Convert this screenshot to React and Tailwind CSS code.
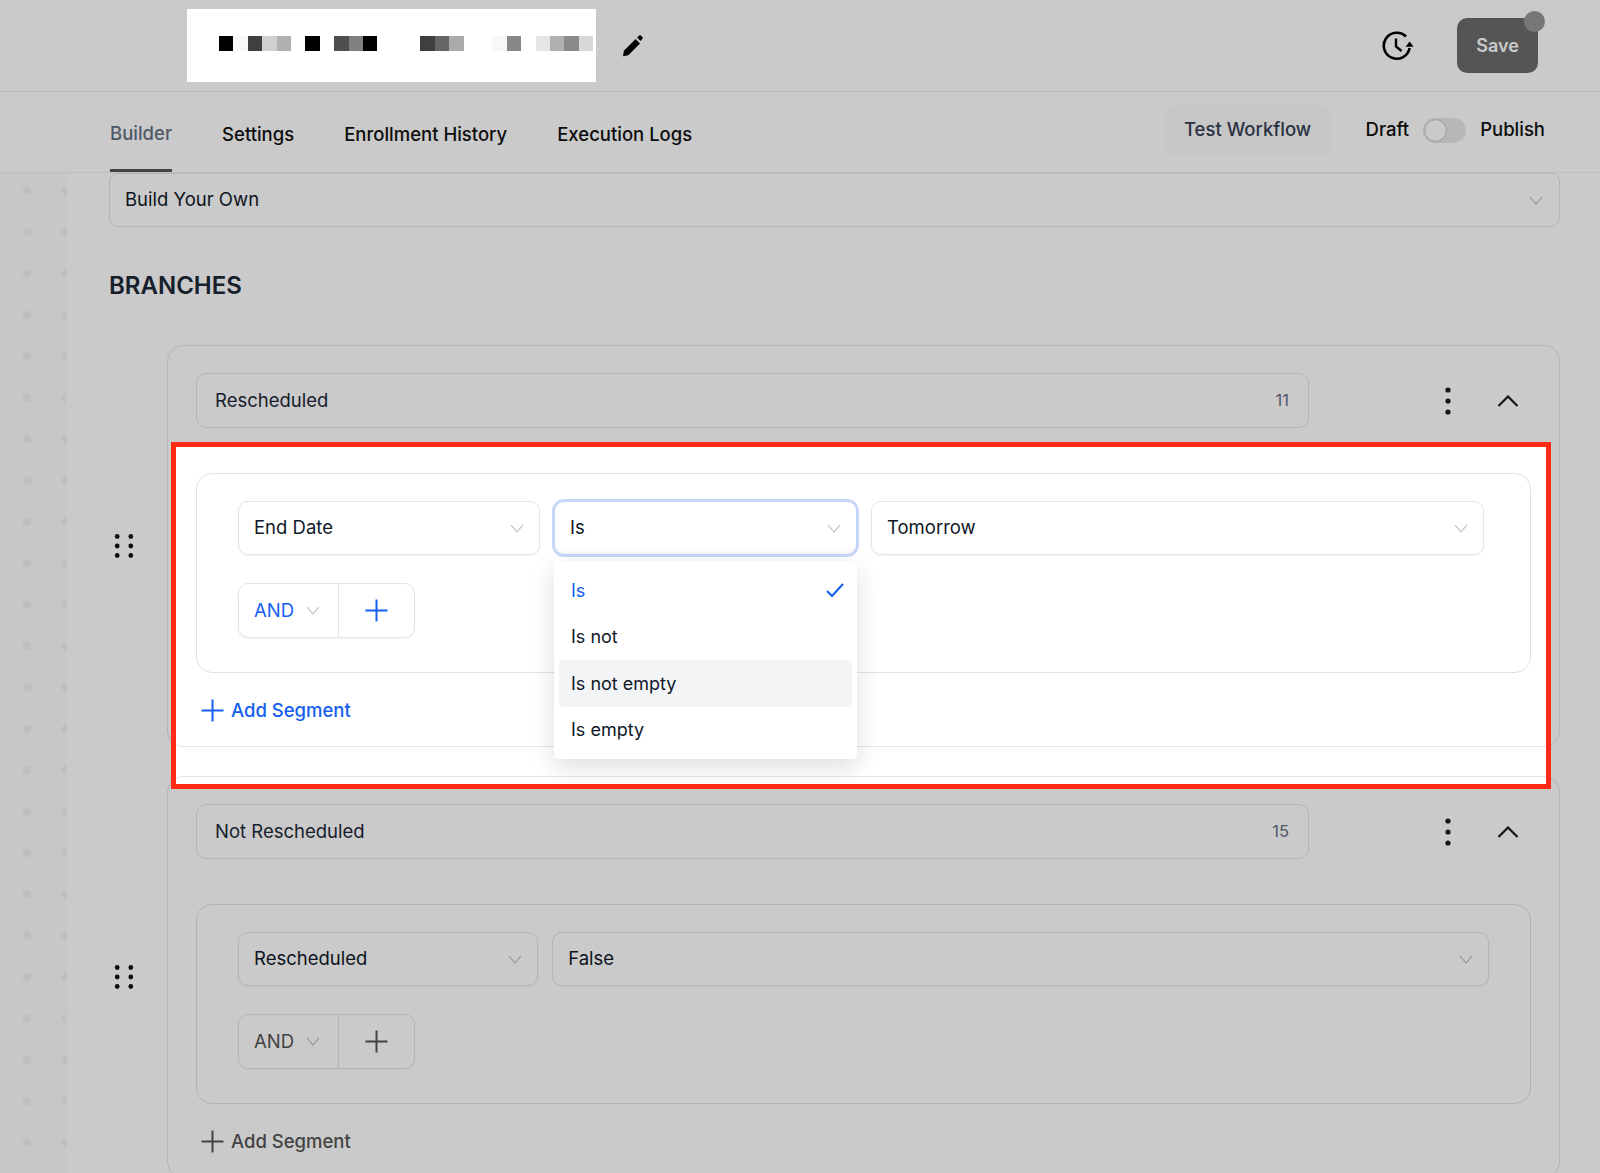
const FONT = "font-['Inter','Liberation_Sans',sans-serif]";

const PIXELS = [
  "#000000","#f8f8f8","#3f3f3f","#d0d0d0","#b0b0b0","#ffffff","#000000","#ffffff","#4f4f4f","#808080","#000000",
  "#ffffff","#ffffff","#ffffff","#3f3f3f","#666666","#aaaaaa","#ffffff","#ffffff","#f8f8f8","#888888","#ffffff","#e6e6e6","#b0b0b0","#8a8a8a","#d8d8d8",
];

function Chevron({ className = "" }) {
  return (
    <svg width="14" height="9" viewBox="0 0 14 9" fill="none" className={`shrink-0 ${className}`}>
      <path d="M1 1l6 7 6-7" stroke="#b5b8bf" strokeWidth="1.1" />
    </svg>
  );
}

function Plus({ color, size = 23 }) {
  return (
    <svg width={size} height={size} viewBox="0 0 23 23" fill="none" className="shrink-0">
      <path d="M11.5 0.5v22M0.5 11.5h22" stroke={color} strokeWidth="2" />
    </svg>
  );
}

function Handle() {
  return (
    <svg width="20" height="26" viewBox="0 0 20 26" fill="#111111">
      {[3.5, 13, 22.5].map((y) => (
        <g key={y}>
          <circle cx="3.2" cy={y} r="2.4" />
          <circle cx="16.8" cy={y} r="2.4" />
        </g>
      ))}
    </svg>
  );
}

function Kebab() {
  return (
    <svg width="6" height="28" viewBox="0 0 6 28" fill="#1c1c1c">
      <circle cx="3" cy="3" r="2.6" />
      <circle cx="3" cy="14" r="2.6" />
      <circle cx="3" cy="25" r="2.6" />
    </svg>
  );
}

function Select({ label, className = "", focused = false }) {
  return (
    <div
      className={`flex h-[54px] items-center justify-between rounded-[10px] border bg-white pl-[15px] pr-[15px] text-[18.5px] text-[#101828] ${
        focused
          ? "border-[#c4d4f8] shadow-[0_0_0_2px_#c8d7f9,inset_0_-8px_8px_-8px_#eeeeee]"
          : "border-[#e4e5ea] shadow-[0_1px_2px_rgba(16,24,40,0.05)]"
      } ${className}`}
    >
      <span>{label}</span>
      <Chevron />
    </div>
  );
}

function AndGroup({ color }) {
  return (
    <div className="mt-[28px] flex h-[55px] w-[177px] rounded-[10px] border border-[#e4e5ea] bg-white shadow-[0_1px_2px_rgba(16,24,40,0.05)]">
      <div className="flex w-[100px] items-center gap-[12px] border-r border-[#e4e5ea] pl-[15px] text-[18.5px]" style={{ color }}>
        <span>AND</span>
        <Chevron />
      </div>
      <div className="flex flex-1 items-center justify-center">
        <Plus color={color} />
      </div>
    </div>
  );
}

function Branch({ name, count, accent, children }) {
  return (
    <div className="flex items-center">
      <div className="w-[58px] shrink-0 pl-[5px]">
        <Handle />
      </div>
      <div className="h-[402px] flex-1 rounded-[16px] border border-[#e4e5ea] bg-white pl-[28px] pr-[28px] pt-[27px]">
        <div className="flex h-[55px] items-center">
          <div className="flex h-[55px] w-[1113px] items-center justify-between rounded-[10px] border border-[#e4e5ea] pl-[18px] pr-[19px] text-[18.5px] text-[#1d2939]">
            <span>{name}</span>
            <span className="text-[16.5px] text-[#667085]">{count}</span>
          </div>
          <div className="ml-[136px]">
            <Kebab />
          </div>
          <svg width="22" height="12" viewBox="0 0 22 12" fill="none" className="ml-[46px]">
            <path d="M1.5 11L11 1.5 20.5 11" stroke="#1c1c1c" strokeWidth="2.2" />
          </svg>
        </div>
        <div className="mt-[45px] flex h-[200px] w-[1335px] flex-col rounded-[16px] border border-[#e0e1e8] px-[41px] pt-[27px]">
          {children}
          <AndGroup color={accent} />
        </div>
        <div className="mt-[24px] flex items-center gap-[7px] pl-[5px] text-[18.5px] font-medium" style={{ color: accent }}>
          <Plus color={accent} />
          <span>Add Segment</span>
        </div>
      </div>
    </div>
  );
}

function MenuItem({ label, active, hover }) {
  return (
    <div
      className={`flex h-[46.5px] items-center justify-between rounded-[3px] pl-[12px] pr-[8px] text-[18px] ${
        hover ? "bg-[#f3f4f6]" : ""
      } ${active ? "text-[#155eef]" : "text-[#101828]"}`}
    >
      <span>{label}</span>
      {active && (
        <svg width="18" height="16" viewBox="0 0 18 16" fill="none">
          <path d="M1 9l5 5L17 2" stroke="#155eef" strokeWidth="2" />
        </svg>
      )}
    </div>
  );
}

export default function App() {
  return (
    <div className={`relative h-[1173px] w-[1600px] overflow-hidden bg-white ${FONT}`}>
      <header className="flex h-[92px] items-center border-b border-[#eeeeee]">
        <div className="relative z-20 ml-[187px] flex h-[73px] w-[409px] items-center overflow-hidden bg-white pl-[32px]">
          {PIXELS.map((c, i) => (
            <div key={i} className="mt-[-4px] h-[14.5px] w-[14.4px] shrink-0" style={{ backgroundColor: c }} />
          ))}
        </div>
        <svg width="24" height="24" viewBox="0 0 24 24" className="ml-[24px]" fill="#000000">
          <path d="M3 22.2l.9-5.4L15.6 5.1l4.4 4.4L8.3 21.2zM17.1 3.6l1.9-1.9c.6-.6 1.4-.6 2 0l1.3 1.4c.6.6.6 1.4 0 2l-1.8 1.9z" />
        </svg>
        <svg width="32" height="30" viewBox="0 0 32 30" fill="none" className="ml-[738px]" stroke="#000000" strokeWidth="2.6">
          <path d="M24 5.5A13 13 0 1 0 27.6 17" />
          <path d="M14 7.5v8l5.5 4.5" strokeWidth="2.4" />
          <path d="M27.6 10.5l-4 5.2h8z" fill="#000000" stroke="none" />
        </svg>
        <div className="relative ml-[43px] flex h-[55px] w-[81px] items-center justify-center rounded-[10px] bg-[#6c6c6c] text-[18px] font-semibold text-white">
          Save
          <span className="absolute right-[-7px] top-[-7px] h-[21px] w-[21px] rounded-full bg-[#979797]" />
        </div>
      </header>

      <nav className="flex h-[81px] items-stretch border-b border-[#f2f2f2] pl-[110px]">
        <div className="flex gap-[50px] text-[18.5px] font-medium text-[#111111]">
          <div className="flex items-center border-b-[3px] border-[#555555] pt-[6px] text-[#667085]">Builder</div>
          <div className="flex items-center pt-[6px]">Settings</div>
          <div className="flex items-center pt-[6px]">Enrollment History</div>
          <div className="flex items-center pt-[6px]">Execution Logs</div>
        </div>
        <div className="ml-auto flex items-center pb-[4px] pr-[55px] text-[18.5px] font-medium text-[#111111]">
          <div className="flex h-[50px] w-[166px] items-center justify-center rounded-[10px] bg-[#fafafa] text-[#344054]">
            Test Workflow
          </div>
          <span className="ml-[35px]">Draft</span>
          <div className="ml-[14px] flex h-[25px] w-[43px] items-center rounded-full bg-[#e8e8e8] pl-[2px]">
            <div className="h-[21px] w-[21px] rounded-full bg-white shadow-[0_0_2px_rgba(0,0,0,0.4)]" />
          </div>
          <span className="ml-[14px]">Publish</span>
        </div>
      </nav>

      <div className="flex">
        <div className="w-[67px] shrink-0 self-stretch bg-[#fbfbfb] bg-[radial-gradient(circle,#f1f1f1_4px,transparent_4.6px)] bg-[length:39px_41.4px] bg-[position:7.5px_-3px]" />
        <main className="flex-1 pl-[42px] pr-[41px]">
          <div className="flex h-[54px] items-center justify-between rounded-[10px] rounded-t-[8px] border border-[#e4e5ea] pl-[15px] pr-[16px] text-[18.5px] text-[#101828]">
            <span>Build Your Own</span>
            <Chevron />
          </div>
          <h2 className="mt-[44px] h-[30px] text-[24px] font-semibold leading-[30px] text-[#1d2939]">BRANCHES</h2>
          <div className="mt-[44px] flex flex-col gap-[29px]">
            <Branch name="Rescheduled" count="11" accent="#155eef">
              <div className="relative flex gap-[14px]">
                <Select label="End Date" className="w-[302px]" />
                <div className="relative w-[303px]">
                  <Select label="Is" focused />
                  <div className="absolute left-0 top-[60px] z-20 w-[303px] rounded-[4px] bg-white px-[5px] py-[6px] shadow-[0_8px_24px_rgba(16,24,40,0.14)]">
                    <MenuItem label="Is" active />
                    <MenuItem label="Is not" />
                    <MenuItem label="Is not empty" hover />
                    <MenuItem label="Is empty" />
                  </div>
                </div>
                <Select label="Tomorrow" className="w-[613px]" />
              </div>
            </Branch>
            <Branch name="Not Rescheduled" count="15" accent="#555555">
              <div className="flex gap-[14px]">
                <Select label="Rescheduled" className="w-[302px]" />
                <Select label="False" className="w-[943px]" />
              </div>
            </Branch>
          </div>
        </main>
      </div>

      <div className="pointer-events-none absolute left-[171px] top-[442px] z-10 h-[347px] w-[1380px] border-[5px] border-[#ff2a16] shadow-[0_0_0_2000px_rgba(0,0,0,0.208)]" />
    </div>
  );
}
